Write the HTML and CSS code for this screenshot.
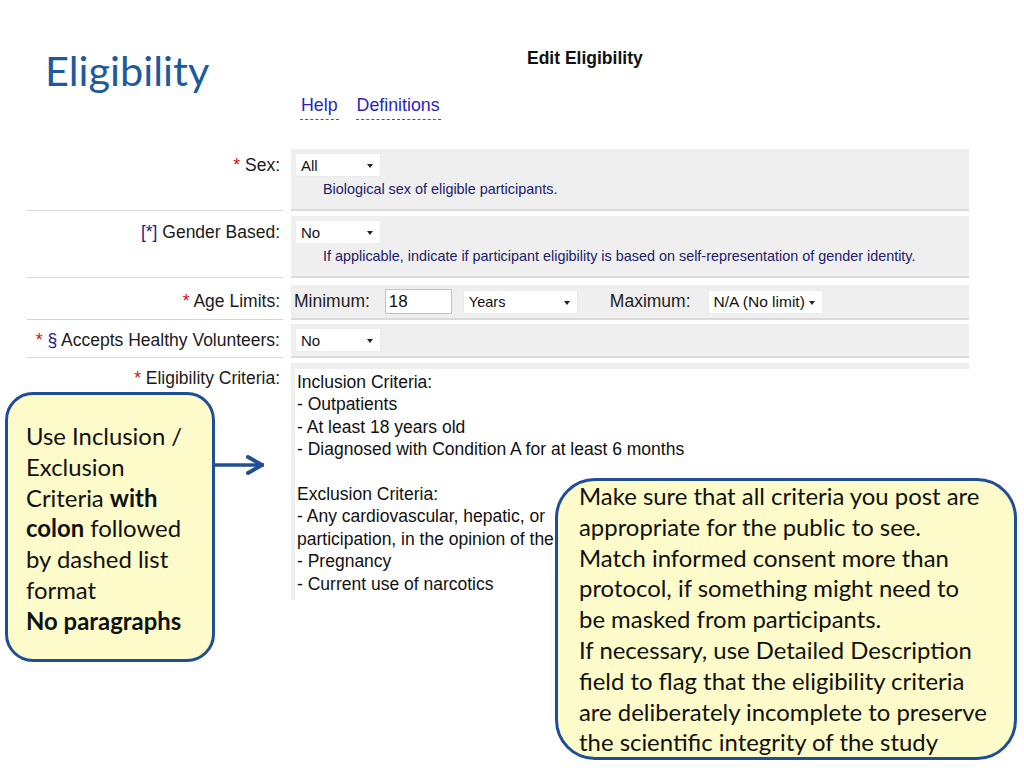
FILE: index.html
```html
<!DOCTYPE html>
<html lang="en">
<head>
    <meta charset="UTF-8">
    <title>Eligibility</title>
    <link rel="stylesheet" href="styles.css">
</head>
<body>
    <div class="slide">
        <header class="top">
            <h1 class="title">Eligibility</h1>
            <div class="form-head">
                <div class="form-title">Edit Eligibility</div>
                <div class="links">
                    <a class="link">Help</a>
                    <a class="link">Definitions</a>
                </div>
            </div>
        </header>

        <div class="form">
            <div class="row">
                <div class="label"><span class="req">*</span> Sex:</div>
                <div class="field">
                    <div class="select sel-sm">All</div>
                    <div class="hint">Biological sex of eligible participants.</div>
                </div>
            </div>

            <div class="row row-gender">
                <div class="label"><span class="opt">[*]</span> Gender Based:</div>
                <div class="field">
                    <div class="select sel-sm">No</div>
                    <div class="hint">If applicable, indicate if participant eligibility is based on self-representation of gender identity.</div>
                </div>
            </div>

            <div class="row row-age">
                <div class="label"><span class="req">*</span> Age Limits:</div>
                <div class="field field-inline">
                    <span class="inline-label">Minimum:</span>
                    <div class="text-input">18</div>
                    <div class="select sel-lg">Years</div>
                    <span class="inline-label max-label">Maximum:</span>
                    <div class="select sel-lg sel-max">N/A (No limit)</div>
                </div>
            </div>

            <div class="row row-healthy">
                <div class="label"><span class="req">*</span> <span class="opt">§</span> Accepts Healthy Volunteers:</div>
                <div class="field field-short">
                    <div class="select sel-sm">No</div>
                </div>
            </div>

            <div class="row">
                <div class="label label-plain"><span class="req">*</span> Eligibility Criteria:</div>
                <div class="field field-area">
                    <div class="textarea">
                        <div>Inclusion Criteria:</div>
                        <div>- Outpatients</div>
                        <div>- At least 18 years old</div>
                        <div>- Diagnosed with Condition A for at least 6 months</div>
                        <div class="blank"></div>
                        <div>Exclusion Criteria:</div>
                        <div>- Any cardiovascular, hepatic, or</div>
                        <div>participation, in the opinion of the</div>
                        <div>- Pregnancy</div>
                        <div>- Current use of narcotics</div>
                    </div>
                </div>
            </div>
        </div>

        <!-- callouts sit over the form -->
        <div class="callout callout-left">
            <div>Use Inclusion /</div>
            <div>Exclusion</div>
            <div>Criteria <b>with</b></div>
            <div><b>colon</b> followed</div>
            <div>by dashed list</div>
            <div>format</div>
            <div><b>No paragraphs</b></div>
        </div>

        <svg class="arrow" width="56" height="24" viewBox="0 0 56 24">
            <path d="M0 12 H52" fill="none" stroke="#1f4e96" stroke-width="3.5"/>
            <path d="M36 4 L50 12 L36 20" fill="none" stroke="#1f4e96" stroke-width="4" stroke-linecap="round" stroke-linejoin="round"/>
        </svg>

        <div class="callout callout-right">
            <div>Make sure that all criteria you post are</div>
            <div>appropriate for the public to see.</div>
            <div>Match informed consent more than</div>
            <div>protocol, if something might need to</div>
            <div>be masked from participants.</div>
            <div>If necessary, use Detailed Description</div>
            <div>field to flag that the eligibility criteria</div>
            <div>are deliberately incomplete to preserve</div>
            <div>the scientific integrity of the study</div>
        </div>
    </div>
</body>
</html>
```

FILE: styles.css
```css
body {
    margin: 0;
    background: #ffffff;
    font-family: "Liberation Sans", Arial, sans-serif;
}
.slide {
    position: relative;
    width: 1024px;
    height: 768px;
    overflow: hidden;
    padding-top: 46px;
    box-sizing: border-box;
}

/* header */
.top {
    display: flex;
    align-items: flex-start;
}
.title {
    margin: 0;
    width: 291px;
    padding-left: 45px;
    box-sizing: border-box;
    font-family: Lato, "Open Sans", sans-serif;
    font-weight: normal;
    font-size: 41.5px;
    line-height: 48px;
    color: #1c5a9c;
}
.form-head {
    padding-top: 2px;
}
.form-title {
    margin-left: 236px;
    font-weight: bold;
    font-size: 17.5px;
    line-height: 20px;
    color: #111;
}
.links {
    display: flex;
    gap: 17px;
    margin: 27px 0 0 9px;
}
.link {
    font-size: 17.8px;
    line-height: 20px;
    color: #2a1fc0;
    padding: 0 1px 4px;
    border-bottom: 1px dashed #4a4ab0;
}

/* form */
.form {
    margin: 29px 0 0 27px;
}
.row {
    display: grid;
    grid-template-columns: 256px 678px;
    column-gap: 8px;
    margin-bottom: 5px;
}
.row-gender {
    margin-bottom: 7px;
}
.row-age {
    margin-bottom: 4px;
}
.label {
    text-align: right;
    padding: 6px 3px 0 0;
    font-size: 17.5px;
    line-height: 20px;
    color: #1a1a1a;
    border-bottom: 1px solid #d6d6d6;
}
.label-plain {
    border-bottom: none;
    padding-top: 5px;
}
.req {
    color: #cc1111;
}
.opt {
    color: #1d1d8a;
}
.field {
    background: #efefef;
    border-bottom: 2px solid #dadada;
    padding: 4px 4px 11px;
}
.field-short {
    padding-bottom: 4px;
}
.hint {
    margin: 3px 0 0 28px;
    font-size: 14.4px;
    line-height: 18px;
    color: #20206a;
}
.select {
    position: relative;
    display: flex;
    align-items: center;
    height: 24px;
    box-sizing: border-box;
    padding-left: 5px;
    background: #fff;
    border: 1px solid #ececec;
    font-size: 15px;
    color: #111;
}
.select::after {
    content: "";
    position: absolute;
    right: 7px;
    top: 10px;
    border-left: 3.5px solid transparent;
    border-right: 3.5px solid transparent;
    border-top: 4px solid #222;
}
.sel-sm {
    width: 86px;
}
.sel-lg {
    width: 115px;
    font-size: 14.5px;
}
.sel-max {
    font-size: 15.5px;
}
.field-inline {
    display: flex;
    align-items: center;
    padding: 4px 3px 4px;
}
.inline-label {
    font-size: 17.5px;
    color: #222;
}
.text-input {
    width: 67px;
    height: 25px;
    box-sizing: border-box;
    margin: 0 11px 0 15px;
    padding-left: 3px;
    background: #fff;
    border: 1px solid #c4c4c4;
    font-size: 17px;
    line-height: 23px;
    color: #111;
}
.max-label {
    margin: 0 17px 0 32px;
}
.field-area {
    border-bottom: none;
    padding: 6px 0 0 4px;
}
.textarea {
    height: 231px;
    box-sizing: border-box;
    background: #fff;
    padding: 2px 0 0 2px;
    white-space: nowrap;
    overflow: hidden;
    font-size: 17.5px;
    line-height: 22.4px;
    color: #111;
}
.blank {
    height: 22.4px;
}

/* callouts */
.callout {
    position: absolute;
    box-sizing: border-box;
    background: #fdfbc9;
    border: 3px solid #1f4e96;
    font-family: Lato, "Open Sans", sans-serif;
    font-size: 23.9px;
    line-height: 30.8px;
    color: #111;
    white-space: nowrap;
}
.callout-left {
    left: 5px;
    top: 392px;
    width: 210px;
    height: 270px;
    border-radius: 28px;
    padding: 26px 8px 0 18px;
}
.callout-right {
    left: 555px;
    top: 478px;
    width: 462px;
    height: 282px;
    border-radius: 40px;
    padding: 0 4px 0 21px;
}
.arrow {
    position: absolute;
    left: 212px;
    top: 453px;
}
```
